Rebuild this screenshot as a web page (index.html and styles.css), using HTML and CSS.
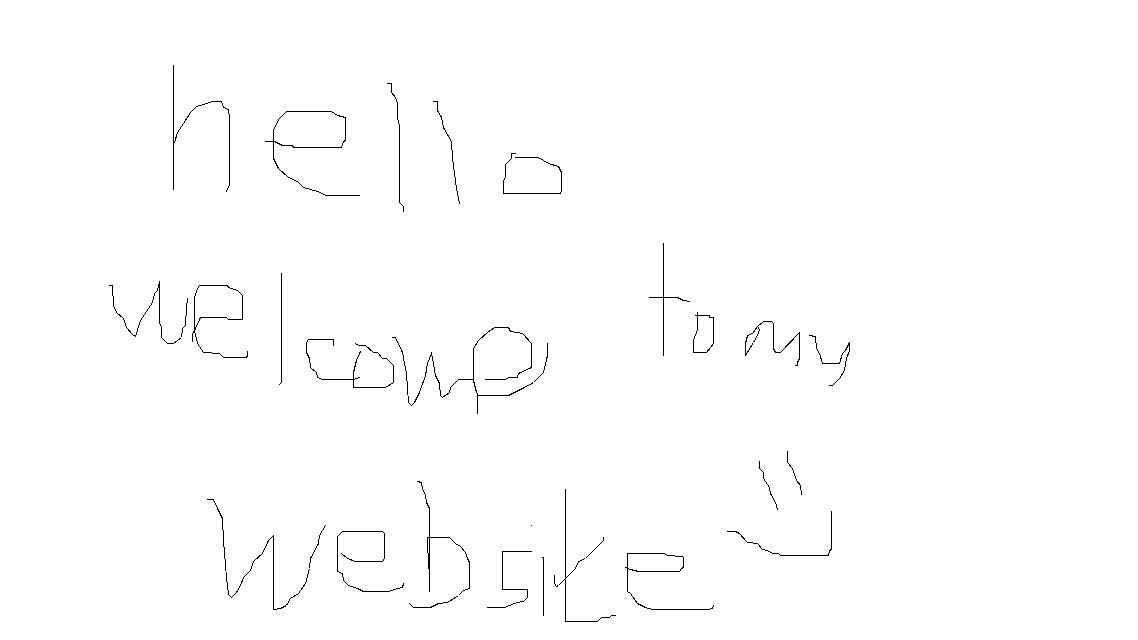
FILE: index.html
```html
<!DOCTYPE html>
<html lang="en">
<head>
    <meta charset="UTF-8">
    <meta name="viewport" content="width=device-width, initial-scale=1.0">
    <title>Sketch</title>
    <link rel="stylesheet" href="styles.css">
</head>
<body>
    <!-- freehand pencil strokes, one polyline per stroke -->
    <svg class="sketch" viewBox="-0.5 -0.5 1138 640" role="img" aria-label="hello welcome to my website, and a smiley">
        <!-- hello -->
        <polyline points="173,65 173,189"/>
        <polyline points="174,142 177,132 183,123 190,112 196,106 203,104 212,101 221,101 223,107 228,109 229,117 229,184 226,191"/>
        <polyline points="265,141 274,141 282,145 292,145 293,147 341,147 343,141 345,140 345,117 337,115 331,111 286,111 279,118 276,123 273,130 273,158 278,168 288,177 297,181 303,187 317,191 326,195 359,195"/>
        <polyline points="387,83 391,83 391,92 395,97 397,103 397,118 399,125 399,202 403,206 403,211"/>
        <polyline points="433,101 437,101 437,110 441,117 443,127 451,141 452,158 454,173 456,188 457,192 458,198 459,203"/>
        <polyline points="515,153 511,153 511,158 505,164 505,177 503,180 503,193 560,193 561,190 561,172 558,166 548,163 538,157 515,157"/>
        <!-- welcome -->
        <polyline points="109,285 112,285 113,305 116,312 123,318 126,327 132,334 135,336 140,320 152,302 154,293 157,290 159,281 159,323 161,326 161,337 167,343 173,343 181,337 182,328 185,325 186,307 187,298"/>
        <polyline points="192,341 192,333 194,330 200,317 226,317 228,319 242,319 242,295 237,290 228,287 227,285 199,285 197,288 194,297 194,330 197,343 203,352 219,353 223,357 245,357 247,356 247,351"/>
        <polyline points="281,273 281,382 279,384"/>
        <polyline points="333,345 333,339 308,339 306,342 306,352 309,358 310,367 316,372 317,377 322,379 353,379 359,377"/>
        <polyline points="355,343 358,345 365,345 373,352 377,352 382,358 386,358 393,365 393,382 385,387 353,387 353,372 356,360 360,351"/>
        <polyline points="392,337 395,337 402,352 404,363 406,373 408,402 411,405 414,402 419,392 425,375 427,363 431,353 433,363 435,375 439,383 440,395 442,397 449,392 450,387 458,379 473,379"/>
        <polyline points="485,379 505,379 508,377 517,377 518,373 531,367 531,343 522,333 510,331 508,327 494,327 487,332 478,340 473,348 473,380 476,392 478,395 508,395 522,388 533,382 543,372 547,355 547,343"/>
        <polyline points="477,395 477,413"/>
        <!-- to my -->
        <polyline points="663,243 663,355"/>
        <polyline points="649,297 677,297 683,300 689,301"/>
        <polyline points="695,315 709,315 709,317 713,317 713,343 710,347 706,352 693,352 693,340 697,329 697,312"/>
        <polyline points="745,355 745,343 747,335 752,333 757,326 763,321 771,321 773,323 773,348 775,352 780,352 799,332 799,358 797,362 797,365 795,365"/>
        <polyline points="745,355 753,342 757,335 759,329 757,326"/>
        <polyline points="809,335 815,336 816,348 819,353 822,363 839,363 842,353 845,350 849,342 849,350 846,358 844,370 839,378 832,385 829,385"/>
        <!-- website -->
        <polyline points="207,499 213,499 218,510 222,518 223,540 226,577 228,594 231,597 236,592 240,585 243,577 250,570 253,561 262,553 268,540 273,535 273,609 280,608 286,605 290,598 298,593 305,583 309,568 310,558 318,543 319,535 325,525"/>
        <polyline points="341,553 347,558 355,561 382,561 384,558 384,533 382,531 342,531 337,536 337,571 342,573 343,580 348,585 357,588 363,591 388,591 397,588 402,587 403,583"/>
        <polyline points="417,481 421,482 422,488 425,495 426,502 429,508 429,591"/>
        <polyline points="428,568 427,537 449,537 455,543 460,546 465,552 467,558 469,562 469,588 463,590 458,595 447,602 438,603 430,607 413,607 409,603"/>
        <polyline points="531,551 502,551 502,589 527,589 527,597 523,601 517,602 506,606 505,607 487,607"/>
        <polyline points="531,525 531,525"/>
        <polyline points="542,557 543,557 543,615"/>
        <polyline points="565,489 565,621 597,621 601,617 609,617 611,615 615,615"/>
        <polyline points="554,575 554,583 556,586 558,585 575,568 578,561 585,558 603,540 603,537"/>
        <polyline points="625,567 630,569 638,571 679,571 681,568 683,567 683,557 682,556 667,555 664,553 627,553 627,591 630,593 637,603 645,607 652,609 707,609 712,608 713,605"/>
        <!-- smiley -->
        <polyline points="759,461 759,468 763,472 763,478 769,487 770,493 775,502 777,509"/>
        <polyline points="787,451 787,462 792,468 796,480 800,485 801,494"/>
        <polyline points="727,531 735,531 739,533 747,542 757,543 762,549 767,550 772,553 778,553 780,555 828,555 829,550 831,549 831,511"/>
    </svg>
</body>
</html>
```

FILE: styles.css
```css
html, body {
    margin: 0;
    background: #fff;
}
.sketch {
    display: block;
    width: 1138px;
    height: 640px;
}
.sketch polyline {
    fill: none;
    stroke: #000;
    stroke-width: 1;
    stroke-linecap: square;
    shape-rendering: crispEdges;
}
```
